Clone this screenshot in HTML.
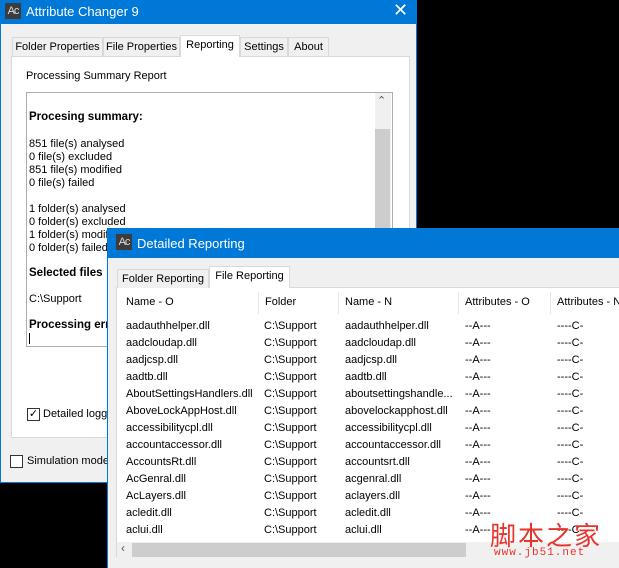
<!DOCTYPE html>
<html><head><style>
*{margin:0;padding:0;box-sizing:border-box}
body{width:619px;height:566px;background:#000;position:relative;overflow:hidden;font-family:"Liberation Sans",sans-serif;font-size:12px;color:#000}
.abs{position:absolute}
.win{background:#f0f0f0}
.title{background:#0078d7;color:#fff;font-size:13px}
.ic{position:absolute;background:#3c3c3c;color:#ddd;font-size:11px;width:16px;height:16px;line-height:16px;text-align:center;letter-spacing:-1px}
.tab{position:absolute;height:19px;border:1px solid #d9d9d9;border-bottom:none;background:#f0f0f0;font-size:11px;line-height:18px;text-align:center;white-space:nowrap;overflow:hidden}
.tab.sel{background:#fff;height:22px;border-color:#d9d9d9;z-index:2}
.t{position:absolute;white-space:nowrap;font-size:11px}
.b{font-weight:bold;font-size:11.5px}
.cb{position:absolute;width:13px;height:13px;border:1px solid #333;background:#fff}
</style></head><body>
<!-- main window -->
<div class="abs win" style="left:0;top:0;width:417px;height:483px;border:1px solid #0078d7"></div>
<div class="abs title" style="left:0;top:0;width:417px;height:24px"></div>
<div class="ic" style="left:5px;top:3px">Ac</div>
<div class="abs" style="left:26px;top:4px;color:#fff;font-size:13px">Attribute Changer 9</div>
<div class="abs" style="left:393px;top:0px;color:#fff;font-size:18px">✕</div>
<div class="abs" style="left:11px;top:56px;width:399px;height:382px;background:#fff;border:1px solid #d9d9d9"></div>
<div class="tab" style="left:12px;top:37px;width:91px">Folder Properties</div>
<div class="tab" style="left:103px;top:37px;width:77px">File Properties</div>
<div class="tab sel" style="left:180px;top:35px;width:60px">Reporting</div>
<div class="tab" style="left:240px;top:37px;width:48px">Settings</div>
<div class="tab" style="left:288px;top:37px;width:41px">About</div>
<div class="t" style="left:26px;top:70px">Processing Summary Report</div>
<div class="abs" style="left:26px;top:92px;width:367px;height:255px;background:#fff;border:1px solid #adadad"></div>
<div class="abs" style="left:375px;top:93px;width:16px;height:253px;background:#f0f0f0"></div>
<div class="abs" style="left:375px;top:129px;width:15px;height:217px;background:#cdcdcd"></div>
<div class="abs" style="left:377px;top:94px;font-size:11px;color:#555">⌃</div>
<div class="t b" style="left:29px;top:111px">Procesing summary:</div>
<div class="t" style="left:29px;top:138px;line-height:13px">851 file(s) analysed<br>0 file(s) excluded<br>851 file(s) modified<br>0 file(s) failed</div>
<div class="t" style="left:29px;top:203px;line-height:13px">1 folder(s) analysed<br>0 folder(s) excluded<br>1 folder(s) modified<br>0 folder(s) failed</div>
<div class="t b" style="left:29px;top:267px">Selected files</div>
<div class="t" style="left:29px;top:293px">C:\Support</div>
<div class="t b" style="left:29px;top:319px">Processing errors</div>
<div class="abs" style="left:29px;top:333px;width:1px;height:11px;background:#000"></div>
<div class="cb" style="left:27px;top:408px;font-size:11px;line-height:11px;text-align:center">✓</div>
<div class="t" style="left:43px;top:408px">Detailed logging</div>
<div class="cb" style="left:10px;top:455px"></div>
<div class="t" style="left:27px;top:455px">Simulation mode</div>
<!-- detail window -->
<div class="abs win" style="left:107px;top:228px;width:520px;height:340px;border-left:1px solid #0078d7"></div>
<div class="abs title" style="left:107px;top:228px;width:512px;height:30px"></div>
<div class="ic" style="left:116px;top:234px">Ac</div>
<div class="abs" style="left:137px;top:236px;color:#fff;font-size:13px">Detailed Reporting</div>
<div class="abs" style="left:116px;top:287px;width:510px;height:270px;background:#fff;border:1px solid #d9d9d9"></div>
<div class="tab" style="left:117px;top:269px;width:92px">Folder Reporting</div>
<div class="tab sel" style="left:209px;top:266px;width:81px">File Reporting</div>
<div class="abs" style="left:258px;top:292px;width:1px;height:22px;background:#e5e5e5"></div>
<div class="abs" style="left:338px;top:292px;width:1px;height:22px;background:#e5e5e5"></div>
<div class="abs" style="left:458px;top:292px;width:1px;height:22px;background:#e5e5e5"></div>
<div class="abs" style="left:550px;top:292px;width:1px;height:22px;background:#e5e5e5"></div>
<div class="t" style="left:126px;top:296px">Name - O</div>
<div class="t" style="left:265px;top:296px">Folder</div>
<div class="t" style="left:345px;top:296px">Name - N</div>
<div class="t" style="left:465px;top:296px">Attributes - O</div>
<div class="t" style="left:557px;top:296px">Attributes - N</div>
<div class="abs" style="left:117px;top:316px;width:502px;height:226px;overflow:hidden">
<div class="t" style="left:9px;top:2px;line-height:17px">aadauthhelper.dll<br>aadcloudap.dll<br>aadjcsp.dll<br>aadtb.dll<br>AboutSettingsHandlers.dll<br>AboveLockAppHost.dll<br>accessibilitycpl.dll<br>accountaccessor.dll<br>AccountsRt.dll<br>AcGenral.dll<br>AcLayers.dll<br>acledit.dll<br>aclui.dll<br>activation.dll</div>
<div class="t" style="left:147px;top:2px;line-height:17px">C:\Support<br>C:\Support<br>C:\Support<br>C:\Support<br>C:\Support<br>C:\Support<br>C:\Support<br>C:\Support<br>C:\Support<br>C:\Support<br>C:\Support<br>C:\Support<br>C:\Support<br>C:\Support</div>
<div class="t" style="left:228px;top:2px;line-height:17px">aadauthhelper.dll<br>aadcloudap.dll<br>aadjcsp.dll<br>aadtb.dll<br>aboutsettingshandle...<br>abovelockapphost.dll<br>accessibilitycpl.dll<br>accountaccessor.dll<br>accountsrt.dll<br>acgenral.dll<br>aclayers.dll<br>acledit.dll<br>aclui.dll<br>activation.dll</div>
<div class="t" style="left:348px;top:2px;line-height:17px">--A---<br>--A---<br>--A---<br>--A---<br>--A---<br>--A---<br>--A---<br>--A---<br>--A---<br>--A---<br>--A---<br>--A---<br>--A---<br>--A---</div>
<div class="t" style="left:440px;top:2px;line-height:17px">----C-<br>----C-<br>----C-<br>----C-<br>----C-<br>----C-<br>----C-<br>----C-<br>----C-<br>----C-<br>----C-<br>----C-<br>----C-<br>----C-</div>
</div>
<div class="abs" style="left:117px;top:542px;width:502px;height:16px;background:#f0f0f0"></div>
<div class="abs" style="left:132px;top:543px;width:334px;height:14px;background:#cdcdcd"></div>
<div class="abs" style="left:121px;top:541px;font-size:12px;color:#555">‹</div>
<div class="abs" style="left:490px;top:516px;color:#e8332c;font-size:26px;font-family:'Noto Sans CJK SC',sans-serif;letter-spacing:2px">脚本之家</div>
<div class="abs" style="left:494px;top:547px;color:#e8332c;font-size:11px;font-family:'Liberation Mono',monospace;letter-spacing:1px">www.jb51.net</div>
</body></html>
